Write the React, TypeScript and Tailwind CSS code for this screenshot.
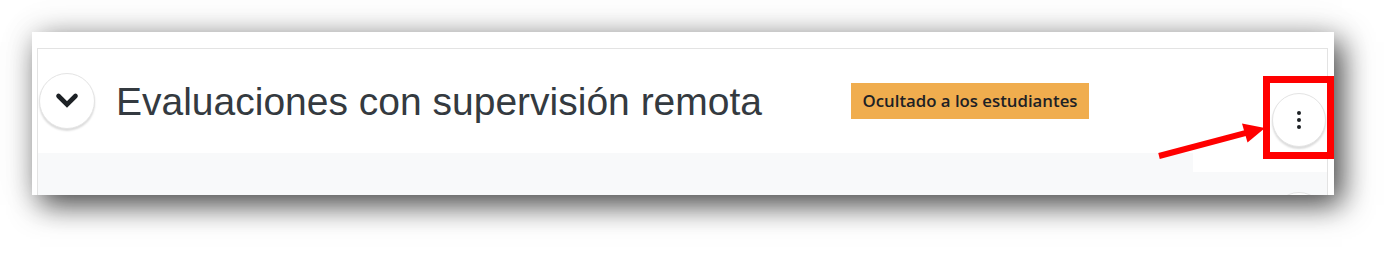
import React from "react";

export default function App() {
  return (
    <div className="relative w-[1399px] h-[260px] bg-white overflow-hidden">
      <div className="pt-[32px] pl-[32px]">
        <div className="w-[1302px] h-[163px] bg-white overflow-hidden flex pl-[5px] pr-[6px] pt-[16px] shadow-[8px_10px_28px_rgba(0,0,0,0.7),0_0_36px_rgba(0,0,0,0.1)]">
          <div className="flex-1 flex flex-col border-l border-t border-r border-[#e3e3e3] min-h-0">
            <div className="h-[104px] flex-none flex items-center bg-white">
              <div className="ml-[1px] w-[56px] h-[56px] rounded-full bg-white border border-[#e4e4e4] shadow-[0_2px_2px_rgba(0,0,0,0.14)] flex items-center justify-center flex-none">
                <svg width="26" height="18" viewBox="0 0 26 18">
                  <polyline
                    points="4.5,4 13,12.5 21.5,4"
                    fill="none"
                    stroke="#1d2125"
                    strokeWidth="4.6"
                    strokeLinecap="round"
                    strokeLinejoin="miter"
                  />
                </svg>
              </div>
              <div className="ml-[21px] w-[735px] flex-none">
                <h3 className="font-['Liberation_Sans',Arial,sans-serif] text-[39px] leading-none text-[#343a40] whitespace-nowrap">
                  Evaluaciones con supervisión remota
                </h3>
              </div>
              <span className="flex-none h-[36px] w-[238px] bg-[#f0ad4e] flex items-center justify-center font-['Open_Sans',sans-serif] font-semibold text-[16.8px] text-[#1d2125] whitespace-nowrap">
                Ocultado a los estudiantes
              </span>
              <div className="ml-auto mr-[1px] self-start mt-[44px] w-[54px] h-[54px] rounded-full bg-white border border-[#e4e4e4] shadow-[0_2px_2px_rgba(0,0,0,0.14)] flex flex-col items-center justify-center gap-[2.5px] flex-none">
                <span className="w-[4.5px] h-[4.5px] rounded-full bg-[#1d2125]"></span>
                <span className="w-[4.5px] h-[4.5px] rounded-full bg-[#1d2125]"></span>
                <span className="w-[4.5px] h-[4.5px] rounded-full bg-[#1d2125]"></span>
              </div>
            </div>
            <div className="flex-1 flex min-h-0 overflow-hidden">
              <div className="flex-1 bg-[#f8f9fa]"></div>
              <div className="w-[134px] flex flex-col">
                <div className="h-[19px] flex-none bg-white"></div>
                <div className="flex-1 bg-[#f8f9fa] pt-[20px] pl-[79px]">
                  <div className="w-[54px] h-[54px] rounded-full bg-white border border-[#e4e4e4]"></div>
                </div>
              </div>
            </div>
          </div>
        </div>
      </div>

      <div className="absolute left-[1263px] top-[76px] w-[71px] h-[83px] border-[7px] border-[#ff0000]"></div>

      <svg className="absolute left-[1150px] top-[115px]" width="120" height="50" viewBox="1150 115 120 50">
        <line x1="1159" y1="156" x2="1248" y2="132.3" stroke="#ff0000" strokeWidth="6" />
        <polygon points="1265,128 1247.5,142.5 1242,123.5" fill="#ff0000" />
      </svg>
    </div>
  );
}
